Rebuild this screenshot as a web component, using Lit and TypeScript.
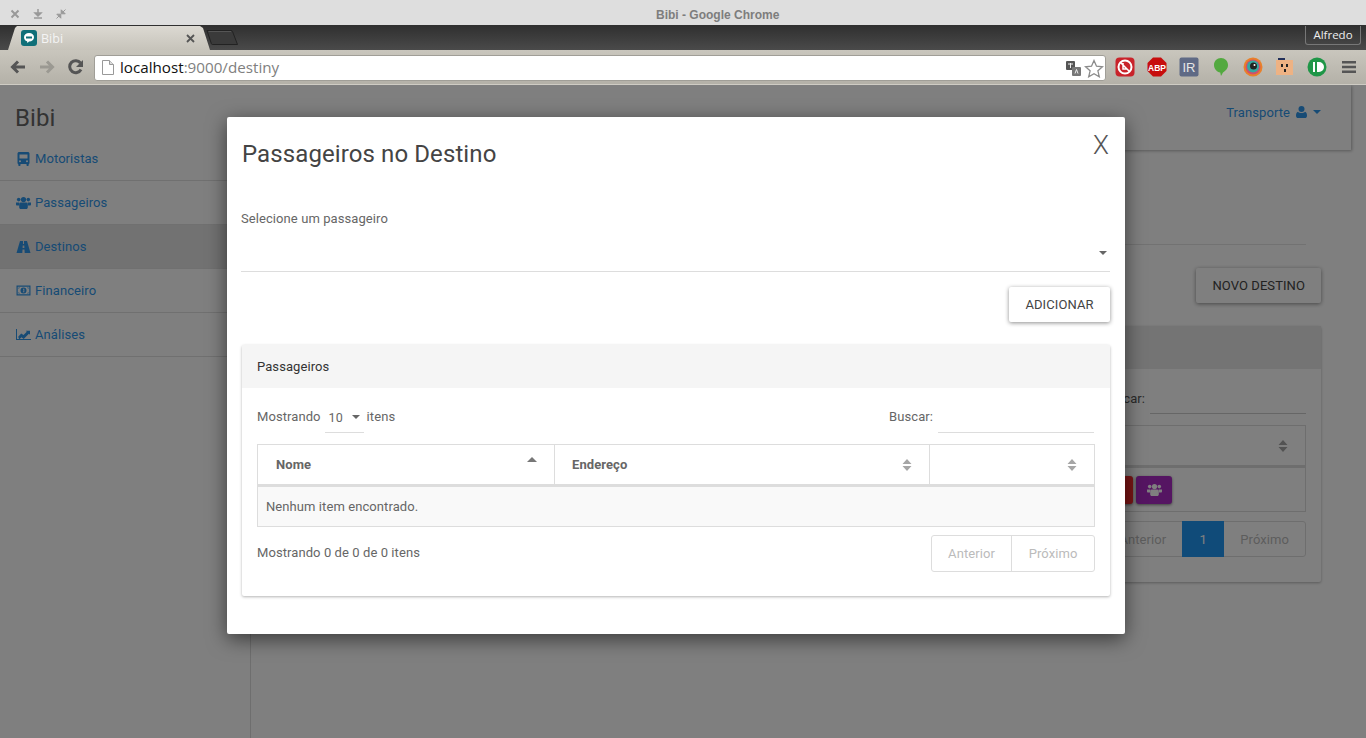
import { LitElement, html, css, svg } from 'lit';
import { customElement } from 'lit/decorators.js';

const sortIcon = svg`<svg class="sort" viewBox="0 0 10 12" width="10" height="12"><path d="M5 0l4.500 5h-9zM5 12L.5 7h9z" fill="currentColor"/></svg>`;
const caret = svg`<svg class="caret" viewBox="0 0 10 5" width="8" height="4"><path d="M0 0h10L5 5z" fill="currentColor"/></svg>`;
const busIcon = svg`<svg viewBox="0 0 14 14" width="14" height="14"><path fill-rule="evenodd" fill="currentColor" d="M3 0h8c1.400 0 2 .7 2 1.600V11c0 .6-.3 1-.8 1v1.300c0 .4-.3.700-.7.700h-.8c-.4 0-.7-.3-.7-.7V12H4v1.300c0 .4-.3.700-.7.700h-.8c-.4 0-.7-.3-.7-.7V12c-.5 0-.8-.4-.8-1V1.600C1 .7 1.600 0 3 0zM3 2.500v4h8v-4zM3.500 8.300a1 1 0 1 0 0 2 1 1 0 0 0 0-2zM10.500 8.300a1 1 0 1 0 0 2 1 1 0 0 0 0-2z"/></svg>`;
const usersIcon = svg`<svg viewBox="0 0 15 12" width="15" height="12"><g fill="currentColor"><circle cx="2.700" cy="2.600" r="1.800"/><circle cx="12.300" cy="2.600" r="1.800"/><circle cx="7.500" cy="2.600" r="2.600"/><path d="M0 5.400h3.300c-.3 1-.3 2-.2 3H.7C.3 8.400 0 8 0 7.500zM15 5.400h-3.300c.3 1 .3 2 .2 3h2.400c.4 0 .7-.4.700-.9zM4.500 5.500h6c.8 0 1.300.8 1.300 2.500v2.200c0 1-.7 1.800-1.600 1.800H4.800c-.9 0-1.600-.8-1.600-1.800V8c0-1.700.5-2.500 1.300-2.500z"/></g></svg>`;
const roadIcon = svg`<svg viewBox="0 0 14 12" width="14" height="12"><path fill-rule="evenodd" fill="currentColor" d="M3.500 0h3v3h1V0h3L14 12H8.200l-.2-3.500H6L5.800 12H0zM6.200 4.500L6.100 7h1.800l-.1-2.500z"/></svg>`;
const moneyIcon = svg`<svg viewBox="0 0 14 11" width="14" height="11"><path fill-rule="evenodd" fill="currentColor" d="M0 .5h14v10H0zM1.200 1.700v7.600h11.600V1.700zM7 2.500a3 3 0 1 1 0 6 3 3 0 0 1 0-6zM6.500 3.800v.8h.5v2H6.400v.7h1.400V3.800zM2 2.500h1.500L2 4zM12 2.500h-1.500L12 4zM2 8.500h1.500L2 7zM12 8.500h-1.500L12 7z"/></svg>`;
const chartIcon = svg`<svg viewBox="0 0 15 11" width="15" height="11"><path fill="currentColor" d="M0 0h1v10h14v1H0z"/><path fill="currentColor" d="M2.200 7.800l3-3.300 2.300 1.600 3.300-3.300-1-1H14v4l-1.100-1.100-5.200 5.200-2.200-1.700-2.300 2.200z"/></svg>`;
const userIcon = svg`<svg viewBox="0 0 11 12" width="11" height="12"><g fill="currentColor"><circle cx="5.500" cy="3" r="3"/><path d="M2 5.800c1 1 2.200 1.300 3.500 1.300S8 6.800 9 5.800c1.300.3 2 1.800 2 3.900C11 11.200 10 12 9 12H2c-1 0-2-.8-2-2.300 0-2.100.7-3.600 2-3.900z"/></g></svg>`;

@customElement('app-root')
export class AppRoot extends LitElement {
  static styles = css`
    :host {
      display: block;
      position: relative;
      width: 1366px;
      height: 738px;
      overflow: hidden;
      font-family: Roboto, "Liberation Sans", sans-serif;
      font-size: 13px;
      letter-spacing: .08px;
      color: #666;
      background: #fff;
    }

    /* browser chrome */
    .titlebar {
      height: 25px;
      background: #dedede;
      display: flex;
      align-items: center;
      position: relative;
      letter-spacing: 0;
    }
    .win-btns { display: flex; gap: 13px; padding: 2px 0 0 10px; color: #999; }
    .win-btns svg { display: block; }
    .win-title {
      position: absolute;
      left: 656px;
      top: 8px;
      font: bold 12px "Liberation Sans", sans-serif;
      color: #7d7d7d;
      white-space: nowrap;
    }
    .tabstrip {
      height: 25px;
      background: linear-gradient(#2f2f2f, #4a4a4a);
      display: flex;
      align-items: flex-end;
      position: relative;
      letter-spacing: 0;
    }
    .tab {
      width: 205px;
      margin-left: 7px;
      height: 24px;
      background: linear-gradient(#dcd9d2, #c6c3ba);
      clip-path: polygon(0 100%, 1px 100%, 8px 2px, 10px 0, 193px 0, 196px 2px, 203px 100%, 205px 100%);
      display: flex;
      align-items: center;
      padding-left: 14px;
      box-sizing: border-box;
      color: #f4f4f4;
      font: 12.500px "Open Sans", sans-serif;
    }
    .favicon {
      width: 16px;
      height: 16px;
      border-radius: 3px;
      background: #0f6f78;
      margin-right: 4px;
      display: flex;
      align-items: center;
      justify-content: center;
    }
    .tab-close { margin-left: auto; margin-right: 17px; color: #555; display: flex; }
    .newtab { display: block; margin: 0 0 5px -6px; }
    .profile {
      position: absolute;
      right: 5px;
      top: 1px;
      width: 56px;
      height: 19px;
      border: 1px solid #777;
      border-top: none;
      border-radius: 0 0 3px 3px;
      box-sizing: border-box;
      color: #eee;
      text-align: center;
      font: 11.500px/18px "Open Sans", sans-serif;
    }
    .toolbar {
      height: 35px;
      background: linear-gradient(#c9c6bd, #b4b1a8);
      border-bottom: 1px solid #cfccc4;
      box-sizing: border-box;
      display: flex;
      align-items: flex-start;
      padding: 5px 0 0 3px;
      letter-spacing: 0;
    }
    .nav-btn { width: 29px; height: 24px; display: flex; align-items: center; justify-content: center; }
    .omnibox {
      margin-left: 4px;
      width: 1012px;
      height: 26px;
      background: #fff;
      border: 1px solid #a09e97;
      border-radius: 3px;
      box-sizing: border-box;
      display: flex;
      align-items: center;
      padding: 0 0 2px 7px;
      font: 15.200px "Open Sans", sans-serif;
      color: #808080;
    }
    .omnibox b { font-weight: 400; color: #111; }
    .omnibox .doc { margin-right: 6px; display: block; }
    .omni-right { margin-left: auto; display: flex; align-items: center; gap: 3px; padding: 2px 1px 0 0; }
    .ext { display: flex; margin-left: 3px; }
    .ext span {
      width: 32px;
      height: 24px;
      display: flex;
      align-items: center;
      justify-content: center;
    }

    /* page behind the dialog */
    .page {
      position: absolute;
      left: 0;
      right: 0;
      top: 85px;
      bottom: 0;
      display: flex;
      background: #fff;
    }
    .sidebar { width: 251px; flex: none; border-right: 1px solid #ddd; box-sizing: border-box; }
    .brand { height: 52px; padding: 19px 0 0 15px; box-sizing: border-box; font-size: 24px; line-height: 28px; color: #666; }
    .menu a {
      height: 44px;
      display: flex;
      align-items: center;
      padding-left: 16px;
      gap: 4px;
      border-bottom: 1px solid #e0e0e0;
      box-sizing: border-box;
      color: #2f96ea;
    }
    .menu a svg { display: block; width: 15px; }
    .menu a.active { background: #e4e4e4; }
    .main { width: 1101px; flex: none; margin-left: -1px; }
    .navbar {
      height: 65px;
      background: #fff;
      box-shadow: 1px 1px 3px rgba(0, 0, 0, .3);
      clip-path: inset(0 -6px -6px 0);
      display: flex;
      justify-content: flex-end;
      align-items: flex-start;
      padding: 19px 30px 0 0;
      box-sizing: border-box;
      color: #2f96ea;
    }
    .navbar .who { display: flex; align-items: center; gap: 6px; height: 16px; }
    .content { padding: 0 30px 0 31px; }
    .rule { height: 1px; background: #e4e4e4; margin: 94px 15px 0 0; }
    .actions { display: flex; justify-content: flex-end; margin-top: 23px; }
    .btn {
      height: 35px;
      padding: 0 16px;
      display: flex;
      align-items: center;
      border-radius: 2px;
      background: #fff;
      color: #444;
      box-shadow: 0 1px 4px rgba(0, 0, 0, .45);
      white-space: nowrap;
    }
    .bg-card {
      margin-top: 23px;
      height: 256px;
      background: #fff;
      box-shadow: 0 1px 3px rgba(0, 0, 0, .3);
      border-radius: 2px;
    }
    .bg-head { height: 43px; background: #e8e8e8; }
    .bg-body { padding: 24px 15px 0; }
    .bg-search { display: flex; justify-content: flex-end; align-items: flex-start; gap: 5px; height: 21px; color: #555; }
    .bg-search span { margin-top: -2px; }
    .bg-search i { display: block; width: 156px; height: 21px; box-sizing: border-box; border-bottom: 1px solid #ccc; }
    .bg-table { margin-top: 11px; border: 1px solid #ddd; }
    .bg-th { height: 39px; border-bottom: 3px solid #ddd; display: flex; align-items: center; justify-content: flex-end; padding-right: 17px; color: #888; }
    .bg-td { height: 43px; display: flex; justify-content: flex-end; gap: 3px; align-items: flex-start; padding: 8px 133px 0 0; box-sizing: border-box; }
    .sq { width: 36px; height: 28px; border-radius: 3px; box-shadow: 0 1px 3px rgba(0,0,0,.5); display: flex; align-items: center; justify-content: center; color: #fff; }
    .sq.red { background: #f42a2a; }
    .sq.purple { background: #aa2bc4; }
    .bg-pager { margin-top: 9px; display: flex; justify-content: flex-end; }
    .bg-pager > div { display: flex; height: 36px; border: 1px solid #ddd; border-radius: 3px; box-sizing: border-box; align-items: stretch; color: #bbb; }
    .bg-pager span { display: flex; align-items: center; justify-content: center; padding: 0 16px; }
    .bg-pager .cur { background: #2196f3; color: #fff; width: 42px; padding: 0; box-sizing: border-box; margin: -1px 0; }

    .backdrop {
      position: absolute;
      left: 0;
      right: 0;
      top: 85px;
      bottom: 0;
      background: rgba(0, 0, 0, .5);
      padding: 32px 0 0 227px;
      box-sizing: border-box;
    }

    /* dialog */
    .modal {
      width: 898px;
      height: 517px;
      background: #fff;
      border-radius: 2px;
      box-shadow: 0 5px 20px rgba(0, 0, 0, .55);
      padding: 15px 15px 0;
      box-sizing: border-box;
    }
    .modal-head { display: flex; justify-content: space-between; align-items: flex-start; height: 72px; }
    .modal-head h2 { margin: 6px 0 0; font-size: 24px; font-weight: 400; line-height: 32px; color: #444; letter-spacing: .1px; }
    .close { font-size: 26px; font-weight: 300; line-height: 28px; color: #555; margin: -1px 1px 0 0; }
    .pick-label { line-height: 15px; margin: 7px 0 0 -1px; }
    .pick {
      height: 46px;
      margin: 0 0 0 -1px;
      border-bottom: 1px solid #ddd;
      display: flex;
      justify-content: flex-end;
      align-items: center;
      padding: 9px 3px 0 0;
      box-sizing: border-box;
      color: #666;
    }
    .add-row { display: flex; justify-content: flex-end; margin-top: 15px; }
    .add-row .btn { width: 101px; padding: 0; justify-content: center; box-sizing: border-box; }
    .card {
      margin-top: 23px;
      height: 251px;
      width: 868px;
      border-radius: 2px;
      box-shadow: 0 1px 3px rgba(0, 0, 0, .3);
    }
    .card-head { height: 43px; background: #f5f5f5; color: #333; padding-left: 15px; display: flex; align-items: center; }
    .card-body { padding: 0 15px; }
    .tools { height: 56px; display: flex; align-items: center; justify-content: space-between; }
    .tools .l, .tools .r { display: flex; align-items: center; }
    .size {
      width: 39px;
      height: 32px;
      margin: 1px 3px 0 4px;
      border-bottom: 1px solid #ddd;
      display: flex;
      align-items: center;
      gap: 9px;
      padding: 2px 0 0 4px;
      box-sizing: border-box;
      font-size: 12.500px;
    }
    .size svg { display: block; }
    .tools .r i { display: block; width: 156px; height: 32px; margin: 1px 0 0 5px; border-bottom: 1px solid #ddd; box-sizing: border-box; }
    .tools .r { padding-right: 1px; }
    .grid {
      width: 838px;
      border: 1px solid #ddd;
      box-sizing: border-box;
      height: 83px;
    }
    .grid-head { display: grid; grid-template-columns: 297px 375px 1fr; height: 39px; border-bottom: 3px solid #ddd; }
    .grid-head > div {
      border-right: 1px solid #ddd;
      display: flex;
      align-items: center;
      justify-content: space-between;
      padding: 0 17px 0 18px;
      font-weight: 700;
      color: #666;
    }
    .grid-head > div:nth-child(2) { padding-left: 17px; }
    .grid-head > div:last-child { border-right: none; }
    .sort { color: #a6a6a6; display: block; }
    .sort.up { color: #777; margin-top: -11px; }
    .grid-row { height: 39px; background: #f9f9f9; display: flex; align-items: center; padding-left: 8px; }
    .foot { display: flex; justify-content: space-between; margin-top: 8px; width: 838px; }
    .foot > span { padding-top: 10px; }
    .pager {
      display: flex;
      height: 37px;
      border: 1px solid #ddd;
      border-radius: 3px;
      box-sizing: border-box;
      color: #bbb;
    }
    .pager span { display: flex; align-items: center; justify-content: center; width: 79px; }
    .pager span + span { border-left: 1px solid #ddd; width: 83px; box-sizing: border-box; }
  `;

  render() {
    return html`
      <div class="titlebar">
        <div class="win-btns">
          <svg width="10" height="10" viewBox="0 0 10 10"><path d="M1.500 1.500l7 7M8.500 1.500l-7 7" stroke="currentColor" stroke-width="2"/></svg>
          <svg width="10" height="10" viewBox="0 0 10 10"><path d="M5 0v5M2 4l3 3 3-3zM1 9h8" stroke="currentColor" stroke-width="1.500" fill="currentColor"/></svg>
          <svg width="10" height="10" viewBox="0 0 10 10"><path d="M.5 9.500l3-3M.8 5.200h4v4zM9.500.5l-3 3M9.200 4.800h-4v-4z" stroke="currentColor" stroke-width="1" fill="currentColor"/></svg>
        </div>
        <div class="win-title">Bibi - Google Chrome</div>
      </div>
      <div class="tabstrip">
        <div class="tab">
          <span class="favicon"><svg width="12" height="12" viewBox="0 0 12 12"><path d="M6 1c3 0 5 1.600 5 4.300S9 9.500 6 9.500L4.500 11 4 9.300C2 8.700 1 7.200 1 5.300 1 2.600 3 1 6 1z" fill="#fff"/><path d="M3 4.500h6v2H3z" fill="#0f6f78"/></svg></span>
          Bibi
          <span class="tab-close"><svg width="9" height="9" viewBox="0 0 9 9"><path d="M1 1l7 7M8 1L1 8" stroke="currentColor" stroke-width="1.800"/></svg></span>
        </div>
        <svg class="newtab" width="33" height="15" viewBox="0 0 33 15"><path d="M1 .5h24c.8 0 1.300.4 1.500 1L31.500 14.500H6.500c-.6 0-1-.3-1.200-1z" fill="#3a3a3a" stroke="#222"/><path d="M2.500 1.500h22.500" stroke="#555"/></svg>
        <div class="profile">Alfredo</div>
      </div>
      <div class="toolbar">
        <span class="nav-btn"><svg width="16" height="14" viewBox="0 0 16 14"><path d="M15 7H3M8 1.500L2.500 7 8 12.500" fill="none" stroke="#555" stroke-width="3"/></svg></span>
        <span class="nav-btn"><svg width="16" height="14" viewBox="0 0 16 14"><path d="M1 7h12M8 1.500L13.500 7 8 12.500" fill="none" stroke="#9b9992" stroke-width="3"/></svg></span>
        <span class="nav-btn"><svg width="16" height="16" viewBox="0 0 16 16"><path d="M13 10.500A6 6 0 1 1 12.500 4" fill="none" stroke="#555" stroke-width="3"/><path d="M15 1v7H8z" fill="#555"/></svg></span>
        <div class="omnibox">
          <svg class="doc" width="12" height="15" viewBox="0 0 12 15"><path d="M.5.500h7l4 4v10H.500z" fill="#fff" stroke="#999"/><path d="M7.500.500v4h4" fill="#ddd" stroke="#999"/></svg>
          <b>localhost</b>:9000/destiny
          <span class="omni-right">
            <svg width="15" height="15" viewBox="0 0 15 15"><rect x="0" y="0" width="9" height="9" rx="1" fill="#555"/><rect x="6" y="6" width="9" height="9" rx="1" fill="#777"/><path d="M2 3h5M4.500 2v5M9 12.500l1.500-4 1.500 4" stroke="#eee" fill="none"/></svg>
            <svg width="20" height="19" viewBox="0 0 20 19"><path d="M10 1.500l2.500 5.700 6 .6-4.600 4 1.400 6L10 14.700l-5.300 3.100 1.400-6-4.600-4 6-.6z" fill="#fff" stroke="#8b8b8b" stroke-width="1.300"/></svg>
          </span>
        </div>
        <div class="ext">
          <span><svg width="20" height="20" viewBox="0 0 20 20"><rect width="19" height="19" x=".5" y=".5" rx="4" fill="#c9232a"/><circle cx="10" cy="10" r="6.500" fill="none" stroke="#fff" stroke-width="2"/><path d="M5.500 5.500l9 9M8 6v6h4" stroke="#fff" stroke-width="1.500" fill="none"/></svg></span>
          <span><svg width="20" height="20" viewBox="0 0 20 20"><path d="M6 .5h8L19.500 6v8L14 19.500H6L.5 14V6z" fill="#c70d0d"/><text x="10" y="13.500" text-anchor="middle" font-family="Liberation Sans" font-weight="700" font-size="8.500" fill="#fff">ABP</text></svg></span>
          <span><svg width="20" height="20" viewBox="0 0 20 20"><rect width="19" height="19" x=".5" y=".5" rx="2" fill="#5f6a85"/><text x="10" y="14.500" text-anchor="middle" font-family="Liberation Sans" font-size="13" fill="#e6e6e6">IR</text></svg></span>
          <span><svg width="16" height="20" viewBox="0 0 16 20"><path d="M8 1c4 0 7 3 7 7 0 4-3 6-5 7.500L8 19l-.8-3.500C4 15 1 12 1 8c0-4 3-7 7-7z" fill="#53a93f"/></svg></span>
          <span><svg width="20" height="20" viewBox="0 0 20 20"><circle cx="10" cy="10" r="9.500" fill="#e9802a"/><circle cx="10" cy="10" r="7.500" fill="#d24f6a"/><circle cx="10" cy="9.500" r="6" fill="#36a7a0"/><circle cx="10.500" cy="9" r="3.500" fill="#222"/><circle cx="11.500" cy="8" r="1" fill="#fff"/></svg></span>
          <span><svg width="18" height="20" viewBox="0 0 18 20"><rect y="3" width="17" height="15" fill="#eeb283"/><rect x="2" y="1" width="7" height="2" fill="#22305a"/><rect x="5" y="7" width="2" height="3" fill="#222"/><rect x="10" y="7" width="2" height="3" fill="#222"/><rect x="8" y="12" width="2" height="3" fill="#222"/></svg></span>
          <span><svg width="20" height="20" viewBox="0 0 20 20"><circle cx="10" cy="10" r="9.500" fill="#1f9647"/><path d="M6 5h2v10H6zM10 5h2a5 5 0 0 1 0 10h-2z" fill="#fff"/></svg></span>
          <span><svg width="14" height="14" viewBox="0 0 14 14"><path d="M0 1h14v2.500H0zM0 5.800h14v2.500H0zM0 10.500h14V13H0z" fill="#555"/></svg></span>
        </div>
      </div>

      <div class="page">
        <div class="sidebar">
          <div class="brand">Bibi</div>
          <div class="menu">
            <a>${busIcon}Motoristas</a>
            <a>${usersIcon}Passageiros</a>
            <a class="active">${roadIcon}Destinos</a>
            <a>${moneyIcon}Financeiro</a>
            <a>${chartIcon}Análises</a>
          </div>
        </div>
        <div class="main">
          <div class="navbar"><span class="who">Transporte ${userIcon} ${caret}</span></div>
          <div class="content">
            <div class="rule"></div>
            <div class="actions"><div class="btn">NOVO DESTINO</div></div>
            <div class="bg-card">
              <div class="bg-head"></div>
              <div class="bg-body">
                <div class="bg-search"><span>Buscar:</span><i></i></div>
                <div class="bg-table">
                  <div class="bg-th">${sortIcon}</div>
                  <div class="bg-td"><span class="sq red"></span><span class="sq purple">${usersIcon}</span></div>
                </div>
                <div class="bg-pager"><div><span>Anterior</span><span class="cur">1</span><span>Próximo</span></div></div>
              </div>
            </div>
          </div>
        </div>
      </div>

      <div class="backdrop">
        <div class="modal">
          <div class="modal-head">
            <h2>Passageiros no Destino</h2>
            <span class="close">X</span>
          </div>
          <div class="pick-label">Selecione um passageiro</div>
          <div class="pick">${caret}</div>
          <div class="add-row"><div class="btn">ADICIONAR</div></div>
          <div class="card">
            <div class="card-head">Passageiros</div>
            <div class="card-body">
              <div class="tools">
                <div class="l">Mostrando <span class="size">10 ${caret}</span> itens</div>
                <div class="r">Buscar:<i></i></div>
              </div>
              <div class="grid">
                <div class="grid-head">
                  <div>Nome <svg class="sort up" viewBox="0 0 10 5" width="10" height="5"><path d="M5 0l5 5H0z" fill="currentColor"/></svg></div>
                  <div>Endereço ${sortIcon}</div>
                  <div><span></span>${sortIcon}</div>
                </div>
                <div class="grid-row">Nenhum item encontrado.</div>
              </div>
              <div class="foot">
                <span>Mostrando 0 de 0 de 0 itens</span>
                <div class="pager"><span>Anterior</span><span>Próximo</span></div>
              </div>
            </div>
          </div>
        </div>
      </div>
    `;
  }
}
